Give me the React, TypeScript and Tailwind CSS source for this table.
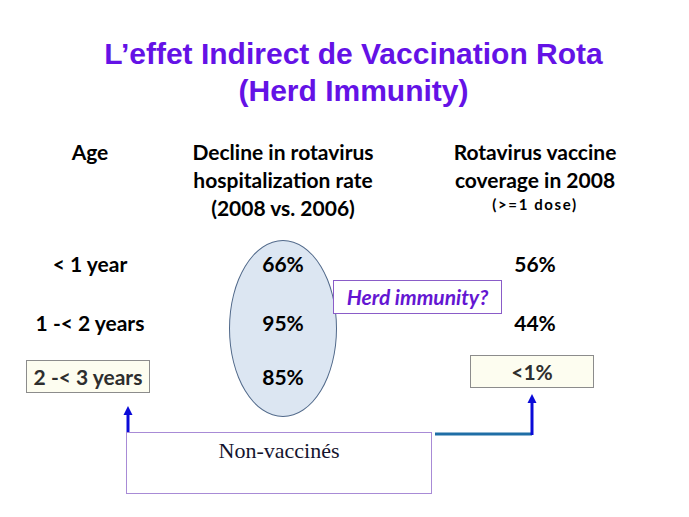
export default function App() {
  const row = 'grid grid-cols-[180px_206px_298px] items-center'
  return (
    <div className="relative w-[689px] h-[517px] bg-white overflow-hidden font-['Lato',sans-serif] text-black">
      {/* ellipse behind the decline column */}
      <div className="absolute left-[229px] top-[240px] w-[108px] h-[177px] rounded-[50%] bg-[#dce6f2] border-[1.5px] border-[#51698a]" />

      <div className="relative">
        <h1 className="pt-[35px] pl-[18px] text-center font-['Liberation_Sans',Arial,sans-serif] font-bold text-[30px] leading-[37px] text-[#6412e6]">
          L’effet Indirect de Vaccination Rota
          <br />
          (Herd Immunity)
        </h1>

        {/* header */}
        <div className="mt-[29px] grid grid-cols-[180px_206px_298px] items-start text-center font-bold text-[21px] leading-[28px]">
          <div>Age</div>
          <div>
            Decline in rotavirus
            <br />
            hospitalization rate
            <br />
            (2008 vs. 2006)
          </div>
          <div>
            Rotavirus vaccine
            <br />
            coverage in 2008
            <div className="mt-[1px] text-[15px] leading-[18px] tracking-[1.6px]">(&gt;=1 dose)</div>
          </div>
        </div>

        <div className="font-bold text-[21px] text-center">
          <div className={`${row} mt-[22px] h-[40px]`}>
            <div>&lt; 1 year</div>
            <div>66%</div>
            <div>56%</div>
          </div>
          <div className={`${row} mt-[19px] h-[40px]`}>
            <div>1 -&lt; 2 years</div>
            <div>95%</div>
            <div>44%</div>
          </div>
          <div className={`${row} mt-[12px] h-[40px]`}>
            <div className="flex justify-center pr-[4px]">
              <div className="w-[124px] h-[33px] flex items-center justify-center border border-[#8c8c8c] bg-[#fdfdf0] text-[#2e2e2e]">
                2 -&lt; 3 years
              </div>
            </div>
            <div>85%</div>
            <div className="flex justify-center pb-[10px] pr-[6px]">
              <div className="w-[124px] h-[33px] flex items-center justify-center border border-[#8c8c8c] bg-[#fdfdf0] text-[#2e2e2e]">
                &lt;1%
              </div>
            </div>
          </div>
        </div>
      </div>

      {/* callouts */}
      <div className="absolute left-[333px] top-[280px] w-[169px] h-[34px] flex items-center justify-center border border-[#8a5cc8] bg-white font-bold italic text-[21px] text-[#6416d2]">
        Herd immunity?
      </div>

      <div className="absolute left-[126px] top-[432px] w-[306px] h-[62px] border border-[#a88bd6] bg-white pt-[1px] text-center font-['Liberation_Serif','Times_New_Roman',serif] text-[22px] text-[#14142e]">
        Non-vaccinés
      </div>

      <svg className="absolute left-0 top-0 pointer-events-none" width="689" height="517" viewBox="0 0 689 517">
        <line x1="128" y1="432" x2="128" y2="414" stroke="#0a0ad8" strokeWidth="3" />
        <polygon points="128,406 123.5,415 132.5,415" fill="#0a0ad8" />
        <line x1="435" y1="434" x2="532" y2="434" stroke="#1f6ea6" strokeWidth="3" />
        <line x1="532" y1="435" x2="532" y2="402" stroke="#0a0ad8" strokeWidth="3" />
        <polygon points="532,394 527.5,403 536.5,403" fill="#0a0ad8" />
      </svg>
    </div>
  )
}
